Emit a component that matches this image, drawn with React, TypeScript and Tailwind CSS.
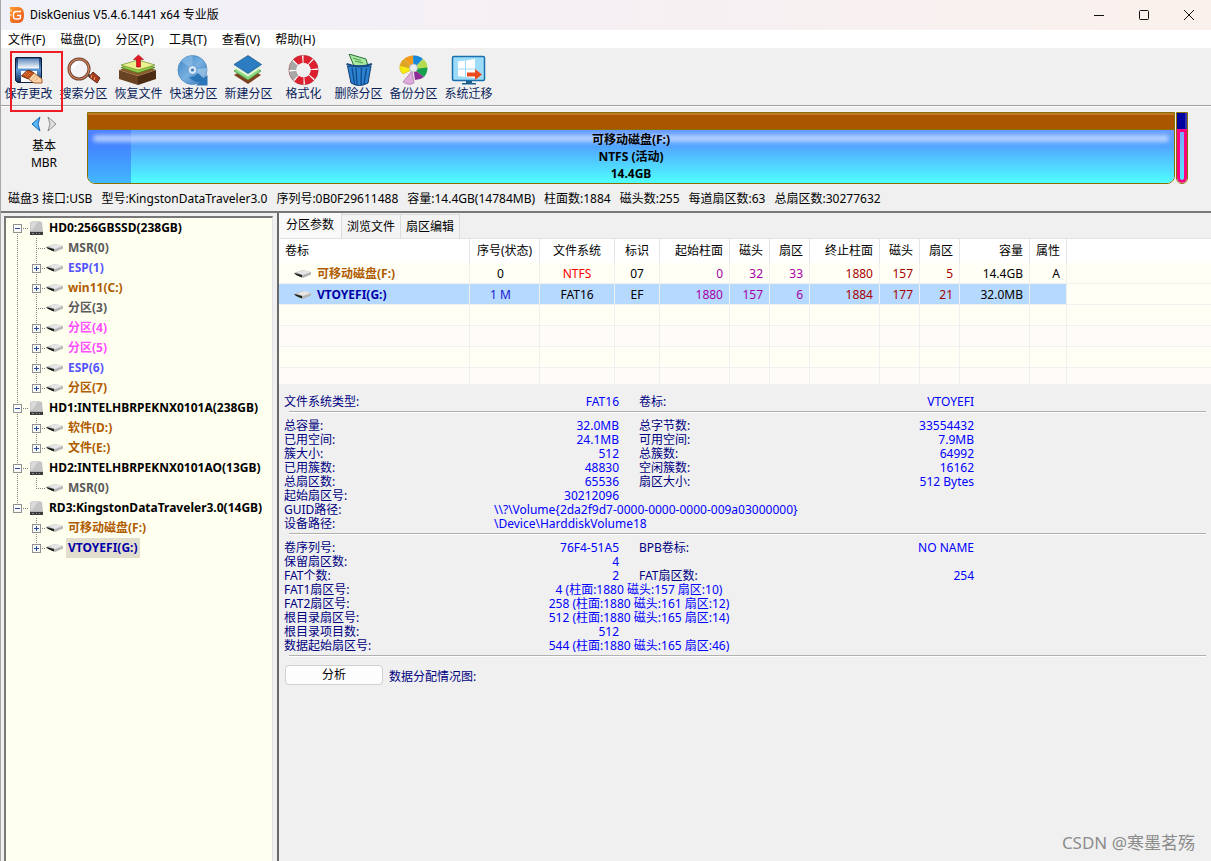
import React, { useState } from 'react';

type Tone = 'gray' | 'blue' | 'brown' | 'pink' | 'navy';

interface Volume {
  name: string;
  tone: Tone;
  leaf?: boolean;
  selected?: boolean;
}

interface Disk {
  name: string;
  volumes: Volume[];
}

const toneClass: Record<Tone, string> = {
  gray: 'text-[#5a5a5a]',
  blue: 'text-[#5454ff]',
  brown: 'text-[#b05c00]',
  pink: 'text-[#ff50ff]',
  navy: 'text-[#0000a8]',
};

const disks: Disk[] = [
  {
    name: 'HD0:256GBSSD(238GB)',
    volumes: [
      { name: 'MSR(0)', tone: 'gray', leaf: true },
      { name: 'ESP(1)', tone: 'blue' },
      { name: 'win11(C:)', tone: 'brown' },
      { name: '分区(3)', tone: 'gray', leaf: true },
      { name: '分区(4)', tone: 'pink' },
      { name: '分区(5)', tone: 'pink' },
      { name: 'ESP(6)', tone: 'blue' },
      { name: '分区(7)', tone: 'brown' },
    ],
  },
  {
    name: 'HD1:INTELHBRPEKNX0101A(238GB)',
    volumes: [
      { name: '软件(D:)', tone: 'brown' },
      { name: '文件(E:)', tone: 'brown' },
    ],
  },
  {
    name: 'HD2:INTELHBRPEKNX0101AO(13GB)',
    volumes: [{ name: 'MSR(0)', tone: 'gray', leaf: true }],
  },
  {
    name: 'RD3:KingstonDataTraveler3.0(14GB)',
    volumes: [
      { name: '可移动磁盘(F:)', tone: 'brown' },
      { name: 'VTOYEFI(G:)', tone: 'navy', selected: true },
    ],
  },
];

const menus = ['文件(F)', '磁盘(D)', '分区(P)', '工具(T)', '查看(V)', '帮助(H)'];

const diskInfo = [
  '磁盘3 接口:USB',
  '型号:KingstonDataTraveler3.0',
  '序列号:0B0F29611488',
  '容量:14.4GB(14784MB)',
  '柱面数:1884',
  '磁头数:255',
  '每道扇区数:63',
  '总扇区数:30277632',
];

/* ---------- icons ---------- */

const LogoIcon = () => (
  <svg className="h-4 w-4" viewBox="0 0 16 16">
    <defs>
      <linearGradient id="logo" x1="0" y1="0" x2="1" y2="1">
        <stop offset="0" stopColor="#ff9a2e" />
        <stop offset="1" stopColor="#e8531b" />
      </linearGradient>
    </defs>
    <path d="M1 0h8c4 0 6 3 6 8s-2 8-6 8H4c-2 0-3-1-3-3z" fill="url(#logo)" />
    <path d="M12 4.500H7Q4.500 4.500 4.500 7v2.500Q4.500 12 7 12H9.500Q11.500 12 11.500 10V8.500H8" fill="none" stroke="#fff" strokeWidth="1.300" />
    <path d="M2 2v3M2 7v2" stroke="#ffe4c8" strokeWidth="1" />
  </svg>
);

const SaveIcon = () => (
  <>
    <defs>
      <linearGradient id="floppy" x1="0" y1="0" x2="0" y2="1">
        <stop offset="0" stopColor="#16305e" />
        <stop offset="0.5" stopColor="#5c98d8" />
        <stop offset="1" stopColor="#10264e" />
      </linearGradient>
      <linearGradient id="shutter" x1="0" y1="0" x2="0" y2="1">
        <stop offset="0" stopColor="#5a86bc" />
        <stop offset="1" stopColor="#ffffff" />
      </linearGradient>
    </defs>
    <path d="M8 3.500H33L33.500 4V28.500H9.500L7.500 26.500V4z" fill="url(#floppy)" stroke="#0c1e40" />
    <path d="M10 4.500H31V14.500H10z" fill="url(#shutter)" />
    <path d="M13 17H29V28H13z" fill="#fff" />
    <path d="M13.500 22L19 16.500Q23 16 26 19L20.500 25z" fill="#c4541c" stroke="#6c2408" />
    <path d="M16 21l3.500-3.500M18.500 22.500L22 19" stroke="#f09058" strokeWidth=".8" />
    <path d="M20.500 25L26 19L34 25V29H26z" fill="#fcd4a8" stroke="#a45c28" />
    <path d="M24 25.500l3.500-4M27 27l3-3.500" stroke="#e0a06c" strokeWidth=".8" />
  </>
);

const SearchIcon = () => (
  <>
    <path d="M23 20L27 22" stroke="#5a4038" strokeWidth="3" />
    <path d="M26 23L30 18L37 24L34 29z" fill="#a83c1c" stroke="#5c2c20" />
    <path d="M29 21l-1 3M32 23l-1 3" stroke="#f0a070" />
    <circle cx="16" cy="15" r="10" fill="#f3f3f5" stroke="#6a4032" strokeWidth="3" />
    <circle cx="16" cy="15" r="10" fill="none" stroke="#d88458" strokeWidth="1.200" />
    <path d="M10 14q1-5 6-5" stroke="#fff" strokeWidth="2" fill="none" />
  </>
);

const RecoverIcon = () => (
  <>
    <path d="M1 16L20 22V31L1 25z" fill="#6a4422" />
    <path d="M20 22L38 16V25L20 31z" fill="#4c2c12" />
    <path d="M1 16L20 9L38 16L20 22z" fill="#8a5c2c" />
    <path d="M3 13.500L20 8L37 13.500L20 19z" fill="#8fcb48" stroke="#4c7a20" strokeWidth=".8" />
    <path d="M3 11L20 6L37 11L20 16z" fill="#ecf090" stroke="#7c9c34" strokeWidth=".8" />
    <path d="M20.500 1L25.500 5.500H22.500V13H18.500V5.500H15.500z" fill="#e81820" stroke="#9c0c10" strokeWidth=".6" />
  </>
);

const QuickIcon = () => (
  <>
    <defs>
      <linearGradient id="disc" x1="0" y1="0" x2="1" y2="1">
        <stop offset="0" stopColor="#3a86ca" />
        <stop offset="0.5" stopColor="#78b0e0" />
        <stop offset="1" stopColor="#3476b8" />
      </linearGradient>
    </defs>
    <circle cx="19.500" cy="16" r="14.500" fill="url(#disc)" stroke="#4a88c0" strokeWidth=".8" />
    <path d="M19.500 16L8 7Q13 1.500 19.500 1.500z" fill="#9cc8ec" opacity=".5" />
    <path d="M19.500 16L34 14Q34 20 31 24z" fill="#c4e0f6" opacity=".5" />
    <circle cx="19.500" cy="16" r="4.500" fill="#d4e6f6" stroke="#5a94c8" />
    <circle cx="19.500" cy="16" r="1.600" fill="#3c78b4" />
    <path d="M16 23Q22 23 25 19L30.500 24.500L34.500 21V31.500H23L27 28Q21 29 16 23z" fill="#2c74b8" />
  </>
);

const LayersIcon = () => (
  <>
    <path d="M6 21L20 13L33 21L20 30z" fill="#7e4420" />
    <path d="M6 17L20 9L33 17L20 26z" fill="#8cd880" stroke="#4c9444" strokeWidth=".8" />
    <path d="M6 14L20 6L33 14L20 22.500z" fill="#e0f6d4" />
    <path d="M6 10.500L20 1.500L33.500 10.500L20 19.500z" fill="#2b7cc0" stroke="#1f5c98" strokeWidth=".8" />
  </>
);

const BuoyIcon = () => (
  <>
    <circle cx="20.500" cy="16" r="11" fill="none" stroke="#f8f8f8" strokeWidth="8" />
    <circle
      cx="20.500" cy="16" r="11" fill="none" stroke="#a8a8a8" strokeWidth="7.500"
      pathLength="8" strokeDasharray=".86 .14 .86 6.14" transform="rotate(135 20.500 16)"
    />
    <circle
      cx="20.500" cy="16" r="11" fill="none" stroke="#dc2030" strokeWidth="7.500"
      pathLength="8" strokeDasharray=".86 .14 .86 .14 .86 .14 .86 .14 .86 .14 .86 2.14" transform="rotate(225 20.500 16)"
    />
    <circle cx="20.500" cy="16" r="14.700" fill="none" stroke="#9c3840" strokeWidth=".5" />
  </>
);

const TrashIcon = () => (
  <>
    <path d="M11 0L28 5L30 12H16z" fill="#a8eaa0" stroke="#2c6c3c" />
    <path d="M15 4l8 2.500M17 7l8 2" stroke="#4c9c54" />
    <path d="M9.500 12H33L30 29Q21 34 13 29z" fill="#2b82d0" stroke="#123c70" />
    <path d="M14 14l2.500 16M18 14l1 17M23.500 14l-.5 17M28.500 14l-2.500 16" stroke="#124a8a" strokeWidth="1.300" />
    <path d="M8.500 10Q21 15 34 10" fill="none" stroke="#1c4c84" strokeWidth="2" />
  </>
);

const PieIcon = () => (
  <>
    <path d="M20.500 15L11 5Q15 1.500 20 1.500z" fill="#f29a1c" />
    <path d="M20.500 15L20 1.500Q26 1 30 5z" fill="#1a88d8" />
    <path d="M20.500 15L30 5Q34.500 8 34.500 14z" fill="#b4dc50" />
    <path d="M20.500 15L34.500 13.500Q34.500 19 31 23z" fill="#16a04c" />
    <path d="M20.500 15L31 23Q27 26 22 26z" fill="#8c2c94" />
    <path d="M20.500 15L10 20Q6 17 7 11z" fill="#f8ec10" stroke="#c8b80c" strokeWidth=".6" />
    <path d="M20.500 15L7 12Q7 8 11 5z" fill="#e0a424" />
    <path d="M19 17L21 29Q16 32 10 28z" fill="#dcaad8" stroke="#b07cb0" strokeWidth=".8" />
    <circle cx="20.500" cy="14" r="4" fill="#e8ecee" stroke="#a8b4b8" strokeWidth=".8" />
  </>
);

const MigrateIcon = () => (
  <>
    <rect x="4.500" y="2.500" width="32" height="24" rx="1.500" fill="#9cdcf8" stroke="#1a70ac" strokeWidth="1.500" />
    <path d="M10 7.500L17 6.500V14.500H10zM18 6.400L27 5V14.500H18zM10 15.500H17V23L10 22zM18 15.500H27V24L18 23z" fill="#fff" />
    <path d="M19 18.500H27V15L34 20.500L27 26V22.500H19z" fill="#ea4c20" />
    <path d="M18 27H24V29H28V30.500H14V29H18z" fill="#1c608c" />
  </>
);

const tools = [
  { label: '保存更改', icon: <SaveIcon /> },
  { label: '搜索分区', icon: <SearchIcon /> },
  { label: '恢复文件', icon: <RecoverIcon /> },
  { label: '快速分区', icon: <QuickIcon /> },
  { label: '新建分区', icon: <LayersIcon /> },
  { label: '格式化', icon: <BuoyIcon /> },
  { label: '删除分区', icon: <TrashIcon /> },
  { label: '备份分区', icon: <PieIcon /> },
  { label: '系统迁移', icon: <MigrateIcon /> },
];

const DiskIcon = () => (
  <svg className="h-4 w-[15px] shrink-0" viewBox="0 0 15 16">
    <path d="M1 2Q7 0 13 2L14 12H1z" fill="#c4c4c4" />
    <path d="M2 2Q6 1 9 1.500L4 9L1.500 10z" fill="#dadada" />
    <path d="M1 12H14V15H1z" fill="#3c3c3c" />
    <path d="M1 11h13v1H1z" fill="#b4b4b4" />
    <path d="M3 13.500h2M7 13.500h1M10 13.500h1" stroke="#8c8c8c" />
  </svg>
);

const VolumeIcon = () => (
  <svg className="h-[10px] w-[17px] shrink-0" viewBox="0 0 17 10">
    <path d="M0 4L9 1L17 3V5.500L9 9L1 5z" fill="#b4b4b4" />
    <path d="M3 3.500L10 1L17 3L9 6z" fill="#e6e6e6" />
    <path d="M0 4L8 6V8.500L2 6z" fill="#1c1c1c" />
    <path d="M5 7.500h1" stroke="#3c8c3c" />
  </svg>
);

/* ---------- tree ---------- */

interface GuideProps {
  width: number;
  x: number;
  up?: boolean;
  down?: boolean;
  across?: boolean;
  box?: 'plus' | 'minus';
}

const Guide = ({ width, x, up, down, across, box }: GuideProps) => (
  <svg width={width} height="20" viewBox={`0 0 ${width} 20`} className="block shrink-0" shapeRendering="crispEdges">
    <g stroke="#808080" strokeDasharray="1 1">
      {up && <path d={`M${x + 0.5} 0V10`} />}
      {down && <path d={`M${x + 0.5} 10V20`} />}
      {across && <path d={`M${x} 10.5H${width}`} />}
    </g>
    {box && (
      <g>
        <rect x={x - 3.5} y="6.500" width="8" height="8" fill="#fafafa" stroke="#919191" />
        <path d={`M${x - 2} 10.5H${x + 3}`} stroke="#2c4c9c" />
        {box === 'plus' && <path d={`M${x + 0.5} 8V13`} stroke="#2c4c9c" />}
      </g>
    )}
  </svg>
);

const DiskTree = () => {
  const [closed, setClosed] = useState<string[]>([]);
  const toggle = (name: string) =>
    setClosed((c) => (c.includes(name) ? c.filter((n) => n !== name) : [...c, name]));

  return (
    <ul className="font-bold leading-5 whitespace-nowrap">
      {disks.map((disk, i) => {
        const last = i === disks.length - 1;
        const open = !closed.includes(disk.name);
        return (
          <li key={disk.name}>
            <div className="flex items-center">
              <button type="button" aria-label={disk.name} aria-expanded={open} onClick={() => toggle(disk.name)}>
                <Guide width={23} x={11} up={i > 0} down={!last} across box={open ? 'minus' : 'plus'} />
              </button>
              <DiskIcon />
              <span className="ml-[5px]">{disk.name}</span>
            </div>
            {open && (
              <ul>
                {disk.volumes.map((v, j) => (
                  <li key={v.name} className="flex items-center">
                    <Guide width={23} x={11} up={!last} down={!last} />
                    {v.leaf ? (
                      <Guide width={17} x={7} up down={j < disk.volumes.length - 1} across />
                    ) : (
                      <button type="button" aria-label={v.name}>
                        <Guide width={17} x={7} up down={j < disk.volumes.length - 1} across box="plus" />
                      </button>
                    )}
                    <VolumeIcon />
                    <span className={`ml-[3px] px-0.5 ${toneClass[v.tone]} ${v.selected ? 'bg-[#e2dece]' : ''}`}>
                      {v.name}
                    </span>
                  </li>
                ))}
              </ul>
            )}
          </li>
        );
      })}
    </ul>
  );
};

/* ---------- partition table ---------- */

const columns = [
  { label: '卷标', width: 'w-[191px]', align: 'text-left pl-1.5' },
  { label: '序号(状态)', width: 'w-[70px]', align: 'text-center' },
  { label: '文件系统', width: 'w-[75px]', align: 'text-center' },
  { label: '标识', width: 'w-[45px]', align: 'text-center' },
  { label: '起始柱面', width: 'w-[70px]', align: 'text-right pr-1.5' },
  { label: '磁头', width: 'w-[40px]', align: 'text-right pr-1.5' },
  { label: '扇区', width: 'w-[40px]', align: 'text-right pr-1.5' },
  { label: '终止柱面', width: 'w-[70px]', align: 'text-right pr-1.5' },
  { label: '磁头', width: 'w-[40px]', align: 'text-right pr-1.5' },
  { label: '扇区', width: 'w-[40px]', align: 'text-right pr-1.5' },
  { label: '容量', width: 'w-[70px]', align: 'text-right pr-1.5' },
  { label: '属性', width: 'w-[37px]', align: 'text-right pr-1.5' },
];

const partitions = [
  {
    cells: ['可移动磁盘(F:)', '0', 'NTFS', '07', '0', '32', '33', '1880', '157', '5', '14.4GB', 'A'],
    nameTone: 'text-[#b05c00]',
    stateTone: '',
    fsTone: 'text-[#ff0000]',
    selected: false,
  },
  {
    cells: ['VTOYEFI(G:)', '1 M', 'FAT16', 'EF', '1880', '157', '6', '1884', '177', '21', '32.0MB', ''],
    nameTone: 'text-[#0000a8]',
    stateTone: 'text-[#2020d0]',
    fsTone: '',
    selected: true,
  },
];

const PartitionTable = () => (
  <table className="w-full table-fixed border-separate border-spacing-0 whitespace-nowrap">
    <thead>
      <tr className="h-6 bg-white">
        {columns.map((c, i) => (
          <th key={i} scope="col" className={`border-r border-[#e5e5e5] p-0 font-normal ${c.width} ${c.align}`}>
            {c.label}
          </th>
        ))}
        <td className="p-0" />
      </tr>
    </thead>
    <tbody>
      {partitions.map((p) => (
        <tr key={p.cells[0]} className="h-[21px] bg-[#fffff5] leading-[18px]">
          {p.cells.map((cell, i) => {
            let tone = '';
            if (i === 0) tone = `font-bold ${p.nameTone}`;
            if (i === 1) tone = `pr-2 ${p.stateTone}`;
            if (i === 2) tone = p.fsTone;
            if (i >= 4 && i <= 6) tone = 'text-[#a800a8]';
            if (i >= 7 && i <= 9) tone = 'text-[#a80000]';
            return (
              <td
                key={i}
                className={`border-r border-b border-[#f0f0f0] pt-0.5 pb-0 ${columns[i].align} ${tone} ${p.selected ? 'bg-[#b5d9ff]' : ''}`}
              >
                {i === 0 ? (
                  <span className="flex items-center gap-1.5 pl-[9px]">
                    <VolumeIcon />
                    {cell}
                  </span>
                ) : (
                  cell
                )}
              </td>
            );
          })}
          <td className="border-b border-[#f0f0f0] p-0" />
        </tr>
      ))}
      {[0, 1, 2, 3].map((r) => (
        <tr key={r} className="h-[21px] odd:bg-[#fffff5] even:bg-[#fffcf7] last:h-[17px]">
          {columns.map((_, i) => (
            <td key={i} className="border-r border-b border-[#f0f0f0] p-0" />
          ))}
          <td className="border-b border-[#f0f0f0] p-0" />
        </tr>
      ))}
    </tbody>
  </table>
);

/* ---------- volume details ---------- */

interface Detail {
  label: string;
  value: string;
  label2?: string;
  value2?: string;
  wide?: 'left' | 'center';
}

const usage: Detail[] = [
  { label: '总容量:', value: '32.0MB', label2: '总字节数:', value2: '33554432' },
  { label: '已用空间:', value: '24.1MB', label2: '可用空间:', value2: '7.9MB' },
  { label: '簇大小:', value: '512', label2: '总簇数:', value2: '64992' },
  { label: '已用簇数:', value: '48830', label2: '空闲簇数:', value2: '16162' },
  { label: '总扇区数:', value: '65536', label2: '扇区大小:', value2: '512 Bytes' },
  { label: '起始扇区号:', value: '30212096' },
  { label: 'GUID路径:', value: '\\\\?\\Volume{2da2f9d7-0000-0000-0000-009a03000000}', wide: 'left' },
  { label: '设备路径:', value: '\\Device\\HarddiskVolume18', wide: 'left' },
];

const fat: Detail[] = [
  { label: '卷序列号:', value: '76F4-51A5', label2: 'BPB卷标:', value2: 'NO NAME' },
  { label: '保留扇区数:', value: '4' },
  { label: 'FAT个数:', value: '2', label2: 'FAT扇区数:', value2: '254' },
  { label: 'FAT1扇区号:', value: '4 (柱面:1880 磁头:157 扇区:10)', wide: 'center' },
  { label: 'FAT2扇区号:', value: '258 (柱面:1880 磁头:161 扇区:12)', wide: 'center' },
  { label: '根目录扇区号:', value: '512 (柱面:1880 磁头:165 扇区:14)', wide: 'center' },
  { label: '根目录项目数:', value: '512' },
  { label: '数据起始扇区号:', value: '544 (柱面:1880 磁头:165 扇区:46)', wide: 'center' },
];

const DetailRows = ({ rows }: { rows: Detail[] }) => (
  <dl className="leading-[14px] whitespace-nowrap text-[#0000ff]">
    {rows.map((r) => (
      <div key={r.label} className="flex">
        <dt className="w-[210px] text-[#000080]">{r.label}</dt>
        {r.wide ? (
          <dd className={r.wide === 'center' ? 'w-[290px] text-center' : ''}>{r.value}</dd>
        ) : (
          <dd className="w-[125px] text-right">{r.value}</dd>
        )}
        {r.label2 && (
          <>
            <dt className="ml-5 w-[210px] text-[#000080]">{r.label2}</dt>
            <dd className="w-[125px] text-right">{r.value2}</dd>
          </>
        )}
      </div>
    ))}
  </dl>
);

const Rule = () => <hr className="mx-[5px] mt-0.5 mb-1.5 h-0.5 border-t border-b border-t-[#b0b0b0] border-b-white" />;

const App = () => {
  const [tab, setTab] = useState(0);

  return (
    <div className="relative flex min-h-screen flex-col border-l border-[#a8a8a8] bg-[#f0f0f0] font-['Noto_Sans','Noto_Sans_CJK_SC',sans-serif] text-xs text-black">
      <header className="flex h-[30px] items-center bg-linear-to-r from-[#f0f1f8] via-[#f6f0f4] to-[#faf1ec] pl-2">
        <LogoIcon />
        <h1 className="ml-[5px] flex-1 font-['Roboto','Noto_Sans_CJK_SC',sans-serif]">DiskGenius V5.4.6.1441 x64 专业版</h1>
        <button type="button" aria-label="最小化" className="flex h-full w-[45px] items-center justify-center">
          <svg className="h-3 w-3" viewBox="0 0 12 12"><path d="M1 6.500h10" stroke="#111" /></svg>
        </button>
        <button type="button" aria-label="最大化" className="flex h-full w-[45px] items-center justify-center">
          <svg className="h-3 w-3" viewBox="0 0 12 12"><rect x="1.500" y="1.500" width="9" height="9" rx="1" fill="none" stroke="#111" /></svg>
        </button>
        <button type="button" aria-label="关闭" className="flex h-full w-[45px] items-center justify-center">
          <svg className="h-3 w-3" viewBox="0 0 12 12"><path d="M1 1l10 10M11 1L1 11" stroke="#111" /></svg>
        </button>
      </header>

      <nav className="flex h-[18px] items-center gap-[15px] bg-white pt-0.5 pl-[7px]">
        {menus.map((m) => (
          <button key={m} type="button">{m}</button>
        ))}
      </nav>

      <div className="flex h-[58px] border-b border-b-[#a0a0a0] pt-[6px]">
        {tools.map((t) => (
          <button key={t.label} type="button" className="flex w-[55px] flex-col items-center text-[#0a1e5a]">
            <svg className="h-8 w-10" viewBox="1 0 40 32">{t.icon}</svg>
            <span className="leading-4 whitespace-nowrap">{t.label}</span>
          </button>
        ))}
      </div>
      <div className="pointer-events-none absolute top-[51px] left-[9px] h-[61px] w-[53px] border-2 border-[#ee1c25]" />

      <section className="border-t border-b-2 border-t-white border-b-[#787878]">
        <div className="flex h-[77px] pt-[5px] pr-[23px]">
          <div className="flex w-[86px] flex-col items-center leading-[17px]">
            <div className="flex gap-1.5 pt-1 pb-[5px]">
              <button type="button" aria-label="上一磁盘">
                <svg className="h-4 w-[10px]" viewBox="0 0 10 16"><path d="M9 1L1 8L9 15L7 8z" fill="#58b8f8" stroke="#1464b4" /></svg>
              </button>
              <button type="button" aria-label="下一磁盘">
                <svg className="h-4 w-[10px]" viewBox="0 0 10 16"><path d="M1 1L9 8L1 15L3 8z" fill="#e0e0e0" stroke="#8c8c8c" /></svg>
              </button>
            </div>
            <span>基本</span>
            <span>MBR</span>
          </div>
          <button
            type="button"
            className="flex min-w-0 flex-1 flex-col overflow-hidden rounded-b-lg border border-[#8a7000] text-center font-bold"
          >
            <span className="h-[17px] w-full border-t-2 border-b border-t-[#c07828] border-b-[#8a7000] bg-[#aa5500]" />
            <span className="flex w-full flex-1 bg-linear-to-b from-[#6a9cff] via-[#52a4ff] via-30% to-[#50ffff]">
              <span className="w-[43px] bg-[#3060ff]/45" />
              <span className="flex-1 pr-[43px] leading-[17px]">
                <span className="mt-[5px] mr-[-38px] -mb-[11px] ml-[-38px] block h-[7px] rounded-full bg-[#c8dcff]/80 blur-[2px]" />
                <span className="relative block">可移动磁盘(F:)</span>
                <span className="relative block">NTFS (活动)</span>
                <span className="relative block">14.4GB</span>
              </span>
            </span>
          </button>
          <button type="button" aria-label="VTOYEFI(G:)" className="ml-px flex w-3 flex-col overflow-hidden rounded-b-md border border-[#8a7000]">
            <span className="h-4 w-full border-r-2 border-[#3030b0] bg-[#0000a0]" />
            <span className="w-full flex-1 rounded-b-md border-[3px] border-[#ff0080] bg-linear-to-b from-[#78a8ff] to-[#50e8ff]" />
          </button>
        </div>
        <p className="flex h-[27px] items-center gap-[9px] pt-0.5 pl-[7px] whitespace-nowrap">
          {diskInfo.map((d) => (
            <span key={d}>{d}</span>
          ))}
        </p>
      </section>

      <main className="flex flex-1">
        <aside className="flex w-[276px] shrink-0 pt-[3px] pr-1 pl-[3px]">
          <div className="flex-1 border-t-2 border-r border-l-2 border-t-[#787878] border-r-[#e3e3e3] border-l-[#787878] bg-[#fffff0]">
            <DiskTree />
          </div>
        </aside>

        <section className="min-w-0 flex-1 border-l-2 border-[#696969]">
          <div role="tablist" className="flex h-[26px] items-end border-b border-[#e2e2e2]">
            {['分区参数', '浏览文件', '扇区编辑'].map((t, i) => (
              <button
                key={t}
                type="button"
                role="tab"
                aria-selected={tab === i}
                onClick={() => setTab(i)}
                className={
                  tab === i
                    ? 'h-[25px] border-r border-[#dcdcdc] bg-[#f9f9f9] px-[7px] pb-0.5'
                    : 'h-6 border-t border-r border-[#dcdcdc] bg-[#f3f3f3] px-[5px]'
                }
              >
                {t}
              </button>
            ))}
          </div>

          <PartitionTable />

          <div className="pt-[10px] pl-[5px]">
            <DetailRows rows={[{ label: '文件系统类型:', value: 'FAT16', label2: '卷标:', value2: 'VTOYEFI' }]} />
            <Rule />
            <DetailRows rows={usage} />
            <Rule />
            <DetailRows rows={fat} />
            <Rule />
            <div className="flex items-center gap-1.5 pt-0.5 pl-px text-[#000080]">
              <button type="button" className="h-5 w-[98px] rounded-sm border border-[#d0d0d0] bg-[#fdfdfd] text-black">
                分析
              </button>
              <span className="pt-1">数据分配情况图:</span>
            </div>
          </div>
        </section>
      </main>

      <footer className="absolute right-4 bottom-1 text-[17px] leading-7 text-[#8c8c8c]">CSDN @寒墨茗殇</footer>
    </div>
  );
};

export default App;
